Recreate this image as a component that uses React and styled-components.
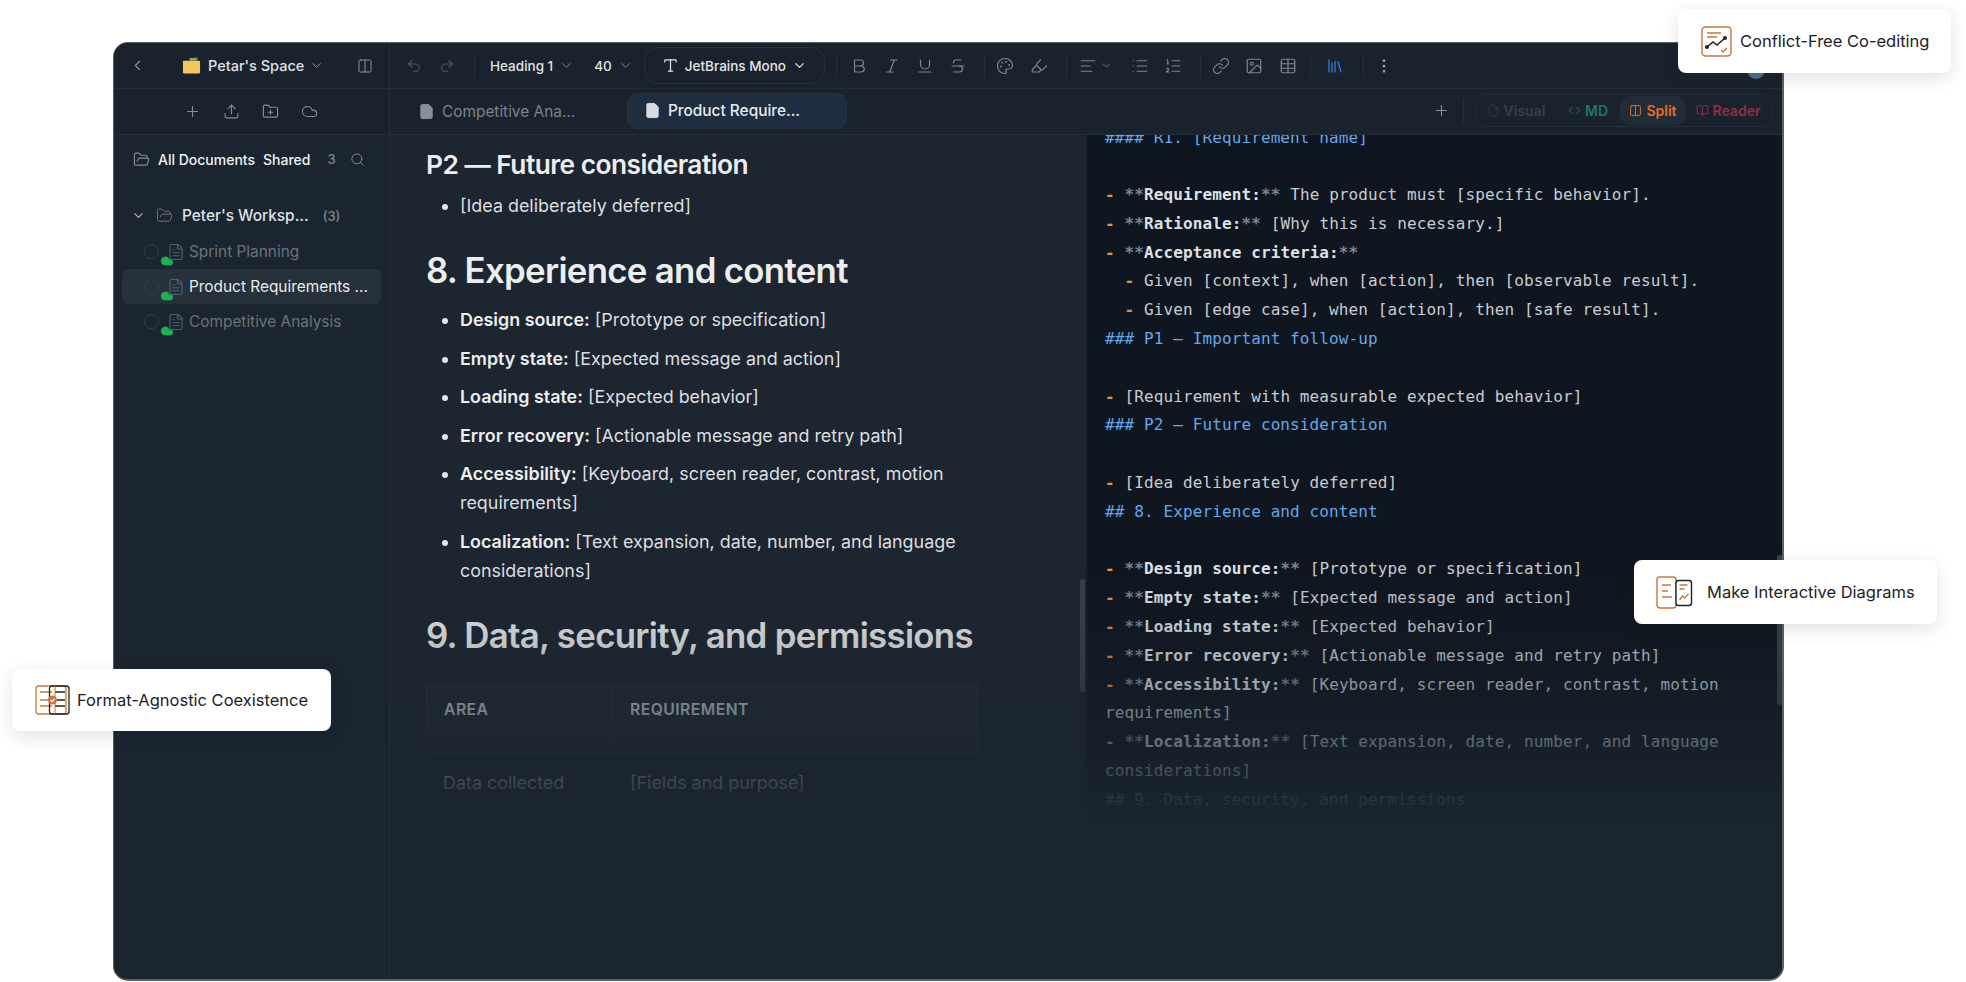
import React from "react";
import styled, { createGlobalStyle } from "styled-components";
import {
  ChevronLeft, ChevronDown, Columns2, Undo2, Redo2, Type, Bold, Italic, Underline, Strikethrough,
  Palette, Highlighter, AlignLeft, List, ListOrdered, Link as LinkIcon, Image as ImageIcon, Table, Library,
  MoreVertical, Plus, Upload, FolderPlus, Cloud, FileText, File, FolderOpen, Search, Code, BookOpen,
} from "lucide-react";

const Global = createGlobalStyle`
  html, body { margin: 0; padding: 0; background: #fff; }
  body { font-family: Inter, "Noto Sans", sans-serif; }
  #root { width: 1966px; height: 982px; overflow: hidden; }
`;

const Page = styled.div`
  position: relative;
  width: 1966px;
  height: 982px;
  padding: 42px 0 0 113px;
  box-sizing: border-box;
  background: #fff;
`;
const Win = styled.div`
  position: relative;
  width: 1671px;
  height: 939px;
  box-sizing: border-box;
  display: flex;
  flex-direction: column;
  border-radius: 15px;
  overflow: hidden;
  background: #1a2530;
  border: 1px solid #5a6067;
  border-width: 1px 2px 2px 1px;
`;
const TopBar = styled.div`
  display: flex;
  height: 45px;
  flex: none;
  background: #1a222d;
  border-bottom: 1px solid #232c37;
`;
const SideHead = styled.div`
  width: 276px;
  flex: none;
  box-sizing: border-box;
  display: flex;
  align-items: center;
  padding-left: 15px;
  border-right: 1px solid #252e39;
  color: #8a929b;
`;
const SpaceIcon = styled.svg`
  margin-left: 36px;
  width: 19px;
  height: 19px;
  flex: none;
`;
const SpaceName = styled.span`
  margin-left: 7px;
  color: #dfe2e5;
  font-size: 14.5px;
  font-weight: 500;
  white-space: nowrap;
`;
const SpaceCaret = styled(ChevronDown)`
  margin-left: 5px;
  flex: none;
`;
const PanelToggle = styled(Columns2)`
  margin-left: 33px;
  flex: none;
`;
const Tools = styled.div`
  flex: 1;
  display: flex;
  align-items: center;
  padding-left: 16px;
  color: #7f8791;
`;
const Tool = styled.span`
  display: inline-flex;
  width: ${(p) => p.$w || 33}px;
  flex: none;
  color: ${(p) => p.$c || "inherit"};
  opacity: ${(p) => p.$o || 1};
`;
const Sep = styled.span`
  width: 1px;
  height: 24px;
  flex: none;
  background: #262f3a;
  margin: 0 ${(p) => p.$r || 15}px 0 ${(p) => p.$l || 0}px;
`;
const Drop = styled.span`
  display: inline-flex;
  align-items: center;
  flex: none;
  gap: 6px;
  color: #dfe2e5;
  font-size: 13.5px;
  font-weight: 500;
  margin-right: ${(p) => p.$mr || 0}px;
  white-space: nowrap;
  svg { color: #7f8791; }
`;
const FontPill = styled.span`
  display: inline-flex;
  align-items: center;
  height: 37px;
  width: 181px;
  box-sizing: border-box;
  flex: none;
  padding-left: 17px;
  gap: 6px;
  border: 1px solid #27313c;
  border-radius: 14px;
  color: #e3e5e8;
  font-size: 13.5px;
  font-weight: 500;
  margin-right: 11px;
  white-space: nowrap;
`;
const TabBar = styled.div`
  display: flex;
  height: 45px;
  flex: none;
  background: #1a222d;
  border-bottom: 1px solid #252e39;
`;
const SideActions = styled.div`
  width: 276px;
  flex: none;
  box-sizing: border-box;
  display: flex;
  align-items: center;
  padding-left: 70px;
  gap: 22px;
  color: #858d96;
  border-right: 1px solid #252e39;
`;
const Tabs = styled.div`
  flex: 1;
  display: flex;
  align-items: center;
  position: relative;
  padding-left: 20px;
`;
const Tab = styled.div`
  display: flex;
  align-items: center;
  box-sizing: border-box;
  flex: none;
  gap: 7px;
  height: 36px;
  width: ${(p) => p.$w}px;
  padding-left: ${(p) => p.$pl}px;
  margin-top: ${(p) => (p.$active ? -2 : 0)}px;
  border-radius: 10px;
  background: ${(p) => (p.$active ? "#1e2d3f" : "transparent")};
  border: 1px solid ${(p) => (p.$active ? "#243345" : "transparent")};
  color: ${(p) => (p.$active ? "#e8eaed" : "#7b838c")};
  font-size: 15.4px;
  font-weight: ${(p) => (p.$active ? 500 : 400)};
  white-space: nowrap;
  svg { color: ${(p) => (p.$active ? "#d8dbe6" : "#8c8f99")}; fill: currentColor; }
`;
const TabRight = styled.div`
  margin-left: auto;
  display: flex;
  align-items: center;
  color: #8a929b;
  padding-right: 9px;
  margin-top: -2px;
`;
const Seg = styled.div`
  display: flex;
  align-items: center;
  box-sizing: border-box;
  width: 298px;
  height: 33px;
  border: 1px solid #242e38;
  border-radius: 12px;
  font-size: 14px;
  font-weight: 600;
`;
const SegItem = styled.span`
  display: inline-flex;
  align-items: center;
  box-sizing: border-box;
  gap: 4px;
  flex: none;
  height: 29px;
  width: ${(p) => p.$w}px;
  justify-content: center;
  color: ${(p) => p.$c};
  border-radius: 10px;
  background: ${(p) => (p.$on ? "#222c37" : "transparent")};
`;
const Body = styled.div`
  flex: 1;
  display: flex;
  min-height: 0;
  position: relative;
`;
const Sidebar = styled.aside`
  width: 276px;
  flex: none;
  box-sizing: border-box;
  padding: 0 8px;
  background: #1a2530;
  border-right: 1px solid #222c37;
  font-size: 15.4px;
`;
const AllDocs = styled.div`
  display: flex;
  align-items: center;
  height: 48px;
  padding-left: 11px;
  color: #f0f1f2;
  font-weight: 500;
  font-size: 14px;
  white-space: nowrap;
  svg { color: #858d96; flex: none; }
`;
const DocsFolder = styled(FolderOpen)`
  margin-right: 8px;
`;
const Shared = styled.span`
  margin-left: 8px;
`;
const Count = styled.span`
  color: #7f8791;
  font-size: 13px;
  margin-left: ${(p) => p.$ml}px;
`;
const SearchIcon = styled(Search)`
  margin-left: 14px;
`;
const Root = styled.div`
  display: flex;
  align-items: center;
  height: 37px;
  margin-top: 14px;
  padding-left: 9px;
  color: #dfe2e5;
  font-weight: 500;
  white-space: nowrap;
`;
const RootFolder = styled(FolderOpen)`
  margin: 0 9px 0 10px;
  color: #6e7781;
`;
const Row = styled.div`
  display: flex;
  align-items: center;
  height: 35px;
  padding-left: 22px;
  border-radius: 6px;
  background: ${(p) => (p.$on ? "#27313c" : "transparent")};
  color: ${(p) => (p.$on ? "#e8eaed" : "#6a737d")};
  white-space: nowrap;
`;
const StatusIcons = styled.span`
  position: relative;
  display: inline-flex;
  align-items: center;
  width: 45px;
  height: 20px;
  flex: none;
`;
const Ring = styled.span`
  width: 15px;
  height: 15px;
  box-sizing: border-box;
  border: 1.5px solid #353f4a;
  border-radius: 50%;
`;
const CloudBadge = styled.span`
  position: absolute;
  left: 16px;
  top: 12px;
  display: flex;
  color: #1fb050;
  svg { fill: currentColor; }
`;
const DocFile = styled.span`
  display: flex;
  margin-left: 8px;
  color: #4f6172;
`;
const Doc = styled.main`
  width: 696px;
  flex: none;
  box-sizing: border-box;
  padding: 0 0 0 36px;
  background: #1d2530;
  color: #dcdee0;
  overflow: hidden;
  position: relative;
`;
const H3 = styled.h3`
  margin: 12px 0 8.6px;
  font-size: 26.3px;
  line-height: 36px;
  font-weight: 600;
  letter-spacing: -0.02em;
  color: #eceded;
  white-space: nowrap;
`;
const H2 = styled.h2`
  margin: ${(p) => p.$mt}px 0 ${(p) => p.$mb}px;
  font-size: 34.8px;
  line-height: 42px;
  font-weight: 600;
  letter-spacing: -0.02em;
  color: #eceded;
  white-space: nowrap;
`;
const Ul = styled.ul`
  margin: 0;
  padding: 0 0 0 34px;
  width: 518px;
  box-sizing: content-box;
  font-size: 17.9px;
  line-height: 28.8px;
  li + li { margin-top: 9.8px; }
  li::marker { color: #e6e6e6; }
  b { font-weight: 600; color: #eceded; }
`;
const DocTable = styled.div`
  display: grid;
  width: 552px;
  grid-template-columns: 187px 1fr;
`;
const Th = styled.div`
  box-sizing: border-box;
  height: 71px;
  padding: 14px 17px 0;
  border: 1px solid #29323c;
  border-left-width: ${(p) => (p.$first ? 1 : 0)}px;
  background: #212933;
  font-size: 15.7px;
  line-height: 22px;
  font-weight: 600;
  letter-spacing: 0.03em;
  color: #c9ccd0;
`;
const Td = styled.div`
  box-sizing: border-box;
  padding: 14px 17px 0;
  font-size: 17.9px;
  line-height: 28px;
  color: #c9ccd0;
`;
const Thumb = styled.span`
  position: absolute;
  right: ${(p) => p.$r}px;
  top: ${(p) => p.$t}px;
  height: ${(p) => p.$h}px;
  width: 5px;
  border-radius: 3px;
  background: #38424c;
`;
const CodePane = styled.section`
  flex: 1;
  min-width: 0;
  position: relative;
  box-sizing: border-box;
  padding: 0 20px 0 17px;
  background: #10161f;
  border-left: 2px solid #151b24;
  overflow: hidden;
`;
const CodeBlock = styled.div`
  margin-top: -11.5px;
  font-family: "DejaVu Sans Mono", "Liberation Mono", monospace;
  font-size: 16px;
  letter-spacing: 0.11px;
  line-height: 28.8px;
  color: #c6ccd4;
  white-space: pre;
  b { font-weight: 700; color: #dde1e6; }
`;
const Line = styled.div`
  height: 28.8px;
`;
const Head = styled.span`
  color: #63a8ea;
`;
const Dash = styled.span`
  color: #d8954f;
  font-weight: 700;
`;
const Stars = styled.span`
  color: #7d858e;
  font-weight: 700;
`;
const Fade = styled.div`
  position: absolute;
  left: 276px;
  right: 0;
  bottom: 0;
  height: 410px;
  pointer-events: none;
  background: linear-gradient(180deg, rgba(26, 37, 48, 0) 0%, rgba(26, 37, 48, 0.28) 25%, rgba(26, 37, 48, 0.65) 45%, #1a2530 62%, #1a2530 100%);
`;
const Avatar = styled.span`
  position: absolute;
  left: 1633px;
  top: 18px;
  width: 18px;
  height: 18px;
  border-radius: 50%;
  background: #4f6f94;
`;
const Callout = styled.div`
  position: absolute;
  left: ${(p) => p.$x}px;
  top: ${(p) => p.$y}px;
  width: ${(p) => p.$w}px;
  height: ${(p) => p.$h}px;
  box-sizing: border-box;
  padding-left: ${(p) => p.$pl}px;
  display: flex;
  align-items: center;
  gap: ${(p) => p.$gap}px;
  background: #fff;
  border-radius: 8px;
  box-shadow: 0 5px 18px rgba(20, 30, 40, 0.13);
  color: #1d2127;
  font-size: 16.5px;
  white-space: nowrap;
`;

const sz = { size: 18, strokeWidth: 1.6 };

function CodeText() {
  const H = (t) => <Line><Head>{t}</Head></Line>;
  const L = (k, rest, ind) => (
    <Line>
      {ind}<Dash>-</Dash>{" "}
      {k && <><Stars>**</Stars><b>{k}</b><Stars>**</Stars></>}
      {rest}
    </Line>
  );
  return (
    <CodeBlock>
      {H("#### R1. [Requirement name]")}
      <Line />
      {L("Requirement:", " The product must [specific behavior].")}
      {L("Rationale:", " [Why this is necessary.]")}
      {L("Acceptance criteria:", "")}
      {L("", "Given [context], when [action], then [observable result].", "  ")}
      {L("", "Given [edge case], when [action], then [safe result].", "  ")}
      {H("### P1 — Important follow-up")}
      <Line />
      {L("", "[Requirement with measurable expected behavior]")}
      {H("### P2 — Future consideration")}
      <Line />
      {L("", "[Idea deliberately deferred]")}
      {H("## 8. Experience and content")}
      <Line />
      {L("Design source:", " [Prototype or specification]")}
      {L("Empty state:", " [Expected message and action]")}
      {L("Loading state:", " [Expected behavior]")}
      {L("Error recovery:", " [Actionable message and retry path]")}
      {L("Accessibility:", " [Keyboard, screen reader, contrast, motion")}
      <Line>requirements]</Line>
      {L("Localization:", " [Text expansion, date, number, and language")}
      <Line>considerations]</Line>
      {H("## 9. Data, security, and permissions")}
    </CodeBlock>
  );
}

const FileRow = ({ on, children }) => (
  <Row $on={on}>
    <StatusIcons>
      <Ring />
      <DocFile><FileText size={18} strokeWidth={1.5} /></DocFile>
      <CloudBadge><Cloud size={14} strokeWidth={1} /></CloudBadge>
    </StatusIcons>
    {children}
  </Row>
);

const CoEditIcon = () => (
  <svg width="31" height="31" viewBox="0 0 31 31" fill="none">
    <rect x="1" y="1" width="29" height="29" rx="3.5" stroke="#c8763f" strokeWidth="1.4" />
    <path d="M6 7h14M6 11h10" stroke="#c8763f" strokeWidth="1.4" />
    <path d="M6 21l6-5 4 3 8-7" stroke="#222" strokeWidth="1.5" />
    <circle cx="6" cy="21" r="2" fill="#222" /><circle cx="24" cy="12" r="2" fill="#222" />
    <path d="M20 24l2 2 4-4" stroke="#c8763f" strokeWidth="1.3" />
  </svg>
);
const DiagramIcon = () => (
  <svg width="37" height="33" viewBox="0 0 37 33" fill="none">
    <rect x="1" y="1" width="19" height="31" rx="3" stroke="#c8763f" strokeWidth="1.4" />
    <path d="M6 9h9M6 15h6M6 21h10" stroke="#c8763f" strokeWidth="1.4" />
    <rect x="20" y="4.5" width="15.5" height="25" rx="2.5" fill="#fff" stroke="#222" strokeWidth="1.4" />
    <path d="M23.5 9h8M23.5 13h5" stroke="#c8763f" strokeWidth="1.4" />
    <path d="M23.5 24l3-4 2 2 4-4" stroke="#c8763f" strokeWidth="1.4" />
  </svg>
);
const FormatIcon = () => (
  <svg width="35" height="30" viewBox="0 0 35 30" fill="none">
    <rect x="1" y="1" width="30" height="28" rx="2.5" stroke="#c8763f" strokeWidth="1.3" />
    <path d="M5 7h12M5 15h12M5 21h12" stroke="#c8763f" strokeWidth="1.3" />
    <rect x="14.5" y="1" width="19.5" height="28" rx="2.5" stroke="#222" strokeWidth="1.3" />
    <path d="M20 7h10M22 15h8M20 21h10" stroke="#222" strokeWidth="1.3" />
    <path d="M20 1v28" stroke="#c8763f" strokeWidth="1" />
    <circle cx="17.5" cy="15" r="4.5" fill="#c8763f" />
    <path d="M15.5 15l1.6 1.6 2.6-3" stroke="#fff" strokeWidth="1.2" />
  </svg>
);

export default function App() {
  return (
    <Page>
      <Global />
      <Win>
        <TopBar>
          <SideHead>
            <ChevronLeft size={17} strokeWidth={1.6} />
            <SpaceIcon viewBox="0 0 20 20">
              <path d="M2 5h16a1 1 0 0 1 1 1v11a1.5 1.5 0 0 1-1.5 1.5h-15A1.5 1.5 0 0 1 1 17V6a1 1 0 0 1 1-1z" fill="#f4c75a" />
              <path d="M8 2h8l-1 3H8z" fill="#7fb069" />
              <path d="M13 1.5h3.5V4H13z" fill="#d9634f" />
            </SpaceIcon>
            <SpaceName>Petar's Space</SpaceName>
            <SpaceCaret size={15} strokeWidth={1.6} />
            <PanelToggle size={16} strokeWidth={1.5} />
          </SideHead>
          <Tools>
            <Tool $o={0.55}><Undo2 {...sz} size={16} /></Tool>
            <Tool $w={35} $o={0.55}><Redo2 {...sz} size={16} /></Tool>
            <Sep />
            <Drop $mr={20}>Heading 1<ChevronDown size={15} strokeWidth={1.6} /></Drop>
            <Drop $mr={11}>40<ChevronDown size={15} strokeWidth={1.6} /></Drop>
            <FontPill><Type size={17} strokeWidth={1.7} />JetBrains Mono<ChevronDown size={15} strokeWidth={2} color="#e3e5e8" /></FontPill>
            <Sep $r={13} />
            <Tool><Bold {...sz} /></Tool>
            <Tool><Italic {...sz} /></Tool>
            <Tool><Underline {...sz} /></Tool>
            <Tool $w={35}><Strikethrough {...sz} /></Tool>
            <Sep $r={11} />
            <Tool $w={34}><Palette {...sz} /></Tool>
            <Tool $w={36}><Highlighter {...sz} /></Tool>
            <Sep $r={12} />
            <Tool $w={21}><AlignLeft {...sz} /></Tool>
            <Tool $w={31}><ChevronDown size={13} strokeWidth={1.6} /></Tool>
            <Tool><List {...sz} /></Tool>
            <Tool $w={36}><ListOrdered {...sz} /></Tool>
            <Sep $r={11} />
            <Tool><LinkIcon {...sz} /></Tool>
            <Tool $w={34}><ImageIcon {...sz} /></Tool>
            <Tool $w={31}><Table {...sz} /></Tool>
            <Sep $r={15} />
            <Tool $w={37} $c="#3f7fe0"><Library {...sz} /></Tool>
            <Sep $r={11} />
            <Tool $c="#a6acb3"><MoreVertical {...sz} /></Tool>
          </Tools>
          <Avatar />
        </TopBar>
        <TabBar>
          <SideActions>
            <Plus size={17} strokeWidth={1.6} />
            <Upload size={17} strokeWidth={1.6} />
            <FolderPlus size={17} strokeWidth={1.6} />
            <Cloud size={17} strokeWidth={1.6} />
          </SideActions>
          <Tabs>
            <Tab $w={217} $pl={7}><File size={17} strokeWidth={1.4} />Competitive Ana...</Tab>
            <Tab $active $w={220} $pl={16}><File size={17} strokeWidth={1.4} />Product Require...</Tab>
            <TabRight>
              <Plus size={17} strokeWidth={1.6} />
              <Sep $l={13} $r={11} />
              <Seg>
                <SegItem $w={80} $c="#36414c"><File size={13} strokeWidth={1.5} />Visual</SegItem>
                <SegItem $w={64} $c="#1a7c62"><Code size={13} strokeWidth={1.8} />MD</SegItem>
                <SegItem $w={66} $on $c="#e0702a"><Columns2 size={13} strokeWidth={1.8} />Split</SegItem>
                <SegItem $w={84} $c="#8f2f4a"><BookOpen size={13} strokeWidth={1.8} />Reader</SegItem>
              </Seg>
            </TabRight>
          </Tabs>
        </TabBar>
        <Body>
          <Sidebar>
            <AllDocs>
              <DocsFolder size={17} strokeWidth={1.6} />
              All Documents
              <Shared>Shared</Shared>
              <Count $ml={17}>3</Count>
              <SearchIcon size={15} strokeWidth={1.6} />
            </AllDocs>
            <Root>
              <ChevronDown size={15} strokeWidth={2} color="#aab0b7" />
              <RootFolder size={17} strokeWidth={1.4} />
              Peter's Worksp...
              <Count $ml={14}>(3)</Count>
            </Root>
            <FileRow>Sprint Planning</FileRow>
            <FileRow on>Product Requirements ...</FileRow>
            <FileRow>Competitive Analysis</FileRow>
          </Sidebar>
          <Doc>
            <H3>P2 — Future consideration</H3>
            <Ul><li>[Idea deliberately deferred]</li></Ul>
            <H2 $mt={29} $mb={14.6}>8. Experience and content</H2>
            <Ul>
              <li><b>Design source:</b> [Prototype or specification]</li>
              <li><b>Empty state:</b> [Expected message and action]</li>
              <li><b>Loading state:</b> [Expected behavior]</li>
              <li><b>Error recovery:</b> [Actionable message and retry path]</li>
              <li><b>Accessibility:</b> [Keyboard, screen reader, contrast, motion requirements]</li>
              <li><b>Localization:</b> [Text expansion, date, number, and language considerations]</li>
            </Ul>
            <H2 $mt={28.2} $mb={28.5}>9. Data, security, and permissions</H2>
            <DocTable>
              <Th $first>AREA</Th>
              <Th>REQUIREMENT</Th>
              <Td>Data collected</Td>
              <Td>[Fields and purpose]</Td>
            </DocTable>
            <Thumb $r={1} $t={444} $h={113} />
          </Doc>
          <CodePane>
            <CodeText />
            <Thumb $r={0} $t={420} $h={150} />
          </CodePane>
          <Fade />
        </Body>
      </Win>
      <Callout $x={1678} $y={9} $w={273} $h={64} $pl={23} $gap={8}><CoEditIcon />Conflict-Free Co-editing</Callout>
      <Callout $x={1634} $y={560} $w={303} $h={64} $pl={22} $gap={14}><DiagramIcon />Make Interactive Diagrams</Callout>
      <Callout $x={12} $y={669} $w={319} $h={62} $pl={23} $gap={7}><FormatIcon />Format-Agnostic Coexistence</Callout>
    </Page>
  );
}
